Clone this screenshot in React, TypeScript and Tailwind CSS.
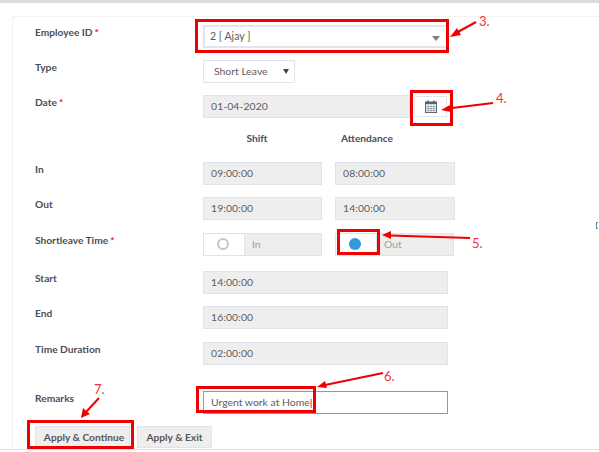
import React from "react";

function Label({ text, req }: { text: string; req?: boolean }) {
  return (
    <div className="w-[168px] h-4 leading-[15px] text-[10.2px] font-bold text-[#4a4f56] shrink-0">
      {text}
      {req && <span className="text-[#ee1111] ml-[2px]">*</span>}
    </div>
  );
}

function Field({ value, width }: { value: string; width: string }) {
  return (
    <div className={`${width} h-[23px] bg-[#eeeeee] border border-[#dfe4ec] pl-[7px] leading-[21px] text-[10.4px] tracking-[0.1px] text-[#5c5c5c] shrink-0`}>
      {value}
    </div>
  );
}

function RadioField({ label, checked, w }: { label: string; checked?: boolean; w: string }) {
  return (
    <div className={`${w} h-[23px] border border-[#dfe4ec] flex shrink-0`}>
      <div className="w-[41px] bg-white flex items-center justify-center pr-[3px] pb-[2px] border-r border-[#dfe4ec]">
        {checked ? (
          <div className="w-3 h-3 rounded-full bg-[#3498db]" />
        ) : (
          <div className="w-3 h-3 rounded-full border-2 border-[#c4c4c4]" />
        )}
      </div>
      <div className="flex-1 bg-[#eeeeee] pl-[7px] leading-[21px] text-[10.4px] text-[#a0a0a0]">{label}</div>
    </div>
  );
}

function Row({ label, req, mt, children }: { label?: string; req?: boolean; mt: string; children: React.ReactNode }) {
  return (
    <div className={`flex items-start ${mt}`}>
      <Label text={label ?? ""} req={req} />
      {children}
    </div>
  );
}

function Box({ cls }: { cls: string }) {
  return <div className={`absolute border-[3px] border-[#f00000] ${cls}`} />;
}

function Note({ text, cls }: { text: string; cls: string }) {
  return <div className={`absolute text-[13px] leading-4 text-[#f4303a] ${cls}`}>{text}</div>;
}

export default function App() {
  return (
    <div className="relative w-[599px] h-[452px] overflow-hidden bg-white font-['Lato',sans-serif]">
      <div className="h-[3px] bg-[#dcdcdc]" />
      <div className="ml-[12px] mt-[13px] h-[433px] border-l border-t border-[#f3f3f3] pl-[22px] pt-[8px]">
        <div className="flex items-start">
          <Label text="Employee ID" req />
          <div className="relative w-[245px] h-[23px] border-2 border-[#e1e5ee] pl-[5px] leading-[19px] text-[10.6px] text-[#5c5c5c] shrink-0">
            2 [ Ajay ]
            <div className="absolute right-[6px] top-[9px] w-0 h-0 border-l-[4px] border-r-[4px] border-t-[5px] border-l-transparent border-r-transparent border-t-[#808080]" />
          </div>
        </div>

        <Row label="Type" mt="mt-[12px]">
          <div className="relative w-[92px] h-[23px] border border-[#dfe4ec] pl-[10px] leading-[21px] text-[10.4px] text-[#5c5c5c] shrink-0">
            Short Leave
            <div className="absolute right-[5px] top-[8px] w-0 h-0 border-l-[3.5px] border-r-[3.5px] border-t-[5px] border-l-transparent border-r-transparent border-t-[#444]" />
          </div>
        </Row>

        <Row label="Date" req mt="mt-[12px]">
          <Field value="01-04-2020" width="w-[207px]" />
          <div className="ml-[4px] mt-[1px] w-[33px] h-[21px] border border-[#e4e6ea] flex items-center justify-center shrink-0">
            <svg width="12" height="13" viewBox="0 0 12 13">
              <rect x="2.2" y="0.5" width="1.6" height="2.6" fill="#5a6370" />
              <rect x="8.2" y="0.5" width="1.6" height="2.6" fill="#5a6370" />
              <rect x="0.5" y="2" width="11" height="10.5" fill="none" stroke="#5a6370" />
              <rect x="0.5" y="2" width="11" height="2.2" fill="#5a6370" />
              <path d="M0.5 6.6H11.5M0.5 8.6H11.5M0.5 10.6H11.5M3.2 4.5V12.5M6 4.5V12.5M8.8 4.5V12.5" stroke="#8a93a0" strokeWidth="0.7" />
            </svg>
          </div>
        </Row>

        <div className="flex mt-[12px] h-[16px] leading-4 text-[10.2px] font-bold text-[#4a4f56]">
          <div className="w-[168px] shrink-0" />
          <div className="w-[108px] text-center">Shift</div>
          <div className="ml-[30px]">Attendance</div>
        </div>

        <Row label="In" mt="mt-[16px]">
          <Field value="09:00:00" width="w-[119px]" />
          <div className="ml-[13px]"><Field value="08:00:00" width="w-[120px]" /></div>
        </Row>
        <Row label="Out" mt="mt-[12px]">
          <Field value="19:00:00" width="w-[119px]" />
          <div className="ml-[13px]"><Field value="14:00:00" width="w-[120px]" /></div>
        </Row>
        <Row label="Shortleave Time" req mt="mt-[13px]">
          <RadioField label="In" w="w-[119px]" />
          <div className="ml-[13px]"><RadioField label="Out" checked w="w-[119px]" /></div>
        </Row>
        <Row label="Start" mt="mt-[15px]">
          <Field value="14:00:00" width="w-[245px]" />
        </Row>
        <Row label="End" mt="mt-[12px]">
          <Field value="16:00:00" width="w-[245px]" />
        </Row>
        <Row label="Time Duration" mt="mt-[13px]">
          <Field value="02:00:00" width="w-[245px]" />
        </Row>
        <Row label="Remarks" mt="mt-[26px]">
          <div className="w-[245px] h-[23px] bg-[#66a6cf] p-px shrink-0">
            <div className="h-full bg-white pl-[7px] leading-[21px] text-[10.4px] text-[#5c5c5c]">
              Urgent work at Home<span className="text-[#333]">|</span>
            </div>
          </div>
        </Row>
        <div className="flex mt-[12px] gap-[7px] text-[10.2px] font-bold text-[#555]">
          <div className="w-[95px] h-[22px] bg-[#eeeeee] border border-[#dfe4ec] pl-[3px] leading-[20px] text-center">Apply &amp; Continue</div>
          <div className="w-[75px] h-[22px] bg-[#eeeeee] border border-[#dfe4ec] leading-[20px] text-center">Apply &amp; Exit</div>
        </div>
      </div>
      <div className="absolute left-0 right-0 top-[449px] h-px bg-[#dde1e6]" />

      <Box cls="left-[195px] top-[19px] w-[254px] h-[34px]" />
      <Box cls="left-[410px] top-[90px] w-[43px] h-[36px]" />
      <Box cls="left-[337px] top-[229px] w-[43px] h-[26px]" />
      <Box cls="left-[196px] top-[386px] w-[120px] h-[27px]" />
      <Box cls="left-[27px] top-[420px] w-[107px] h-[29px]" />

      <svg className="absolute left-0 top-0" width="599" height="452" viewBox="0 0 599 452">
        <g stroke="#f00000" strokeWidth="2" fill="#f00000">
          <line x1="476" y1="22" x2="456" y2="33" />
          <polygon points="450,37 457,28 461,35" stroke="none" />
          <line x1="493" y1="103" x2="448" y2="108.5" />
          <polygon points="441,110 450,105 451,112" stroke="none" />
          <line x1="470" y1="238" x2="390" y2="235.5" />
          <polygon points="382,235 391,231 391,239" stroke="none" />
          <line x1="383" y1="373" x2="325" y2="385" />
          <polygon points="317,387 325,381 327,388" stroke="none" />
          <line x1="99" y1="398" x2="86" y2="412" />
          <polygon points="81,418 83,408 90,414" stroke="none" />
        </g>
      </svg>

      <Note text="3." cls="left-[479px] top-[13px]" />
      <Note text="4." cls="left-[496px] top-[90px]" />
      <Note text="5." cls="left-[472px] top-[235px]" />
      <Note text="6." cls="left-[384px] top-[368px]" />
      <Note text="7." cls="left-[94px] top-[381px]" />
      <div className="absolute left-[596px] top-[222px] w-[2px] h-[7px] border-l border-y border-[#5b86a8]" />
    </div>
  );
}
